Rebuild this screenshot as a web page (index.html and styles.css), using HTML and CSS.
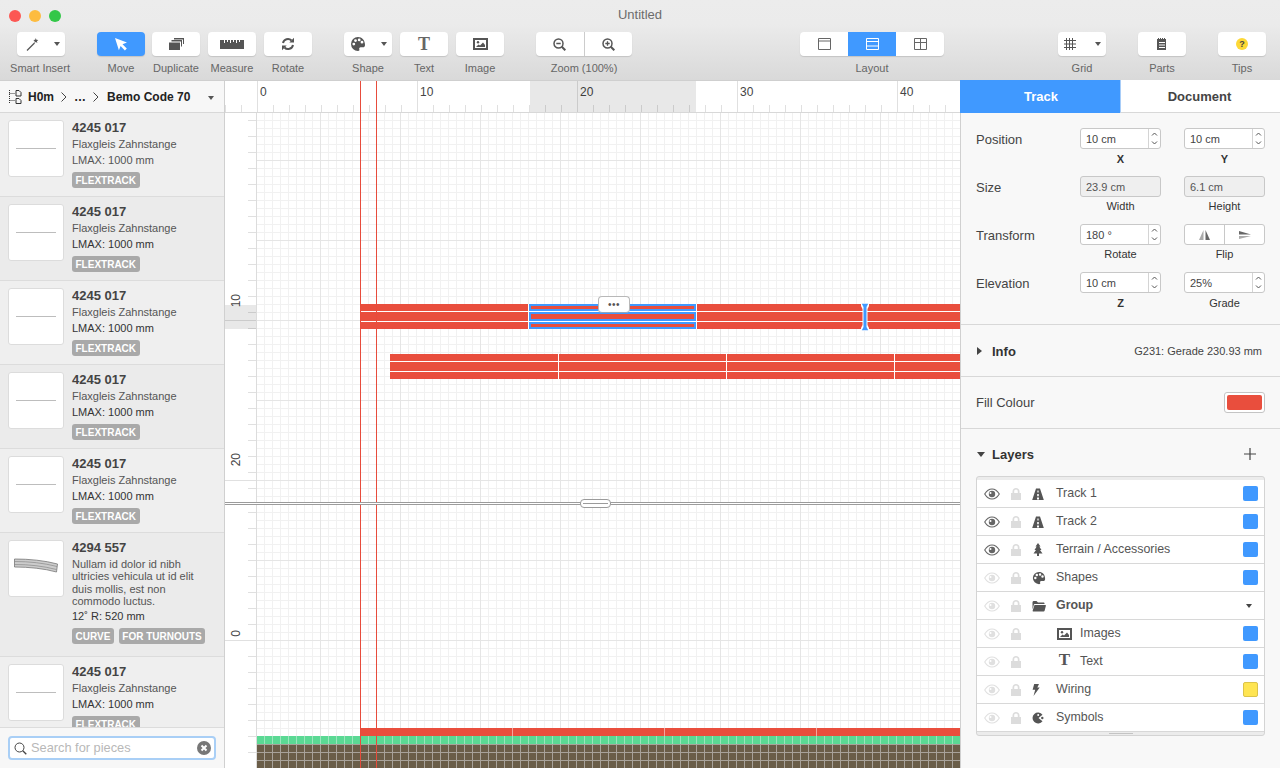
FILE: index.html
```html
<!DOCTYPE html>
<html>
	<head>
		<meta charset="UTF-8">
		<title>Untitled</title>
		<link rel="stylesheet" href="styles.css">
	</head>
	<body>
		<svg class="sprite" xmlns="http://www.w3.org/2000/svg">
			<symbol id="i-palette" viewBox="0 0 16 16"><path fill="currentColor" fill-rule="evenodd" d="M8 1a7 7 0 1 0 0 14c1.3 0 1.7-.8 1.3-1.700-.4-1 .2-2 1.300-2h2.400c1.100 0 2-.8 2-2.300C15 4 12 1 8 1zM3.800 6.700a1.400 1.400 0 1 0 0 2.800 1.400 1.400 0 1 0 0-2.800zM5.500 3.200a1.400 1.400 0 1 0 0 2.800 1.400 1.400 0 1 0 0-2.800zM9.200 2.500a1.400 1.400 0 1 0 0 2.800 1.400 1.400 0 1 0 0-2.800zM12 4.800a1.400 1.400 0 1 0 0 2.800 1.400 1.400 0 1 0 0-2.800z"/></symbol>
			<symbol id="i-image" viewBox="0 0 15 12"><path fill="currentColor" fill-rule="evenodd" d="M0 0h15v12H0zM2 2v8h11V2z"/><path fill="currentColor" d="M3 9l2.500-2.500 1.500 1L10 4.500 12 7v2z"/><circle fill="currentColor" cx="5" cy="4.2" r="1.2"/></symbol>
			<symbol id="i-eye" viewBox="0 0 16 12"><path fill="none" stroke="currentColor" stroke-width="1.100" d="M.7 6C2.800 2.500 5.300 1 8 1s5.200 1.500 7.300 5C13.200 9.500 10.700 11 8 11S2.800 9.500.7 6z"/><path fill="currentColor" fill-rule="evenodd" d="M8 2.800a3.200 3.200 0 1 0 0 6.400 3.200 3.200 0 1 0 0-6.400zM6.500 4a1 1 0 1 1 0 2 1 1 0 1 1 0-2z"/></symbol>
			<symbol id="i-lock" viewBox="0 0 10 12"><path fill="currentColor" fill-rule="evenodd" d="M1.500 5V3.400C1.500 1.400 3 0 5 0s3.500 1.400 3.500 3.400V5H10v7H0V5zM3.200 5h3.600V3.400C6.800 2.300 6 1.600 5 1.600s-1.800.7-1.800 1.800z"/></symbol>
			<symbol id="i-road" viewBox="0 0 12 12"><path fill="currentColor" fill-rule="evenodd" d="M4 .5h4L11.800 12H.2zM5.400 2.500v2h1.200v-2zM5.200 6v2.300h1.600V6zM5 9.500v2h2v-2z"/></symbol>
			<symbol id="i-tree" viewBox="0 0 10 13"><path fill="currentColor" d="M5 0l2.500 3.500H6.300L8.500 7H7l2.500 3.500H6V13H4v-2.500H.5L3 7H1.500l2.200-3.500H2.500z"/></symbol>
			<symbol id="i-folder" viewBox="0 0 14 12"><path fill="currentColor" d="M.5 2.500C.5 1.500 1 1 2 1h2.500L6 2.500h5.500c.6 0 1 .4 1 1V4H3C2.300 4 2 4.300 1.800 5L.5 9.500zM2.500 5h10.800c.5 0 .7.300.6.800l-1.300 5c-.1.500-.5.700-1 .7H1.500c-.7 0-1-.4-.8-1z"/></symbol>
			<symbol id="i-bolt" viewBox="0 0 8 12"><path fill="currentColor" d="M2.200 0H7L5.300 3.500h2.400L1.500 12l1.700-6.300H.6z"/></symbol>
			<symbol id="i-pacman" viewBox="0 0 12 12"><path fill="currentColor" fill-rule="evenodd" d="M10.500 2.800A5.500 5.500 0 1 0 10.500 9.200L6.500 6zM6.200 2a1 1 0 1 1 0 2 1 1 0 1 1 0-2z"/><circle fill="currentColor" cx="10.300" cy="6" r="1.2"/></symbol>
			<symbol id="i-stepper" viewBox="0 0 7 17"><path fill="none" stroke="#555" stroke-width="1" d="M1 5.500l2.500-2.500L6 5.500M1 11.500L3.500 14 6 11.500"/></symbol>
		</svg>

		<header class="head">
			<div class="titlebar">
				<div class="lights">
					<span class="light red"></span>
					<span class="light yellow"></span>
					<span class="light green"></span>
				</div>
				<div class="wintitle">Untitled</div>
				<div></div>
			</div>
			<div class="toolbar">
				<div class="tool first">
					<div class="btn split-caret">
						<svg width="13" height="13" viewBox="0 0 13 13"><path stroke="#555" stroke-width="1.300" d="M1 12.500L8.500 5"/><path fill="#555" d="M9.800 0l.6 1.800L12.300 2l-1.400 1.200.5 1.900-1.600-1-1.600 1 .5-1.900L7.300 2l1.900-.2z"/></svg>
						<i class="caret"></i>
					</div>
					<span>Smart Insert</span>
				</div>
				<div class="tool-group tight">
					<div class="tool">
						<div class="btn active">
							<svg width="14" height="14" viewBox="0 0 14 14"><path fill="#fff" d="M1 1l12 4.400-4.500 1.800 4.300 4.400-1.900 1.800-4.300-4.400-1.700 4.300z"/></svg>
						</div>
						<span>Move</span>
					</div>
					<div class="tool">
						<div class="btn">
							<svg width="15" height="12" viewBox="0 0 15 12"><path fill="#555" d="M5 0h10v6h-1V1.500H5z"/><path fill="#555" d="M2.500 2H13v6.500h-1V3.500H2.500z"/><path fill="#555" d="M0 4.500h11V12H0z"/></svg>
						</div>
						<span>Duplicate</span>
					</div>
					<div class="tool">
						<div class="btn">
							<svg width="24" height="9" viewBox="0 0 24 9"><path fill="#555" fill-rule="evenodd" d="M0 0h24v9H0zM4 0v3h1V0zM7 0v2h1V0zM10 0v3h1V0zM13 0v2h1V0zM16 0v3h1V0zM19 0v2h1V0z"/></svg>
						</div>
						<span>Measure</span>
					</div>
					<div class="tool">
						<div class="btn">
							<svg width="14" height="14" viewBox="0 0 14 14"><path fill="none" stroke="#555" stroke-width="2" d="M2 6a5 5 0 0 1 8.500-2.500M12 8a5 5 0 0 1-8.500 2.500"/><path fill="#555" d="M13 .8v4.700H8.300zM1 13.200V8.500h4.700z"/></svg>
						</div>
						<span>Rotate</span>
					</div>
				</div>
				<div class="tool-group">
					<div class="tool">
						<div class="btn split-caret lead-wide">
							<svg class="ic-dark" width="16" height="16"><use href="#i-palette"/></svg>
							<i class="caret"></i>
						</div>
						<span>Shape</span>
					</div>
					<div class="tool">
						<div class="btn"><b class="serif-t">T</b></div>
						<span>Text</span>
					</div>
					<div class="tool">
						<div class="btn"><svg class="ic-dark" width="15" height="12"><use href="#i-image"/></svg></div>
						<span>Image</span>
					</div>
				</div>
				<div class="tool wide-2">
					<div class="segs">
						<div class="seg-btn">
							<svg width="13" height="13" viewBox="0 0 13 13"><circle cx="5.5" cy="5.5" r="4.500" fill="none" stroke="#555" stroke-width="1.500"/><path stroke="#555" stroke-width="2" d="M8.800 8.800l3.500 3.500"/><path stroke="#555" stroke-width="1.300" d="M3.300 5.500h4.400"/></svg>
						</div>
						<div class="seg-btn">
							<svg width="13" height="13" viewBox="0 0 13 13"><circle cx="5.5" cy="5.5" r="4.500" fill="none" stroke="#555" stroke-width="1.500"/><path stroke="#555" stroke-width="2" d="M8.800 8.800l3.500 3.500"/><path stroke="#555" stroke-width="1.300" d="M3.300 5.500h4.400M5.500 3.300v4.400"/></svg>
						</div>
					</div>
					<span>Zoom (100%)</span>
				</div>
				<div class="tool wide-3">
					<div class="segs">
						<div class="seg-btn plain">
							<svg width="13" height="12" viewBox="0 0 13 12"><path fill="none" stroke="#666" d="M.5.500h12v11H.5zM.5 3h12"/></svg>
						</div>
						<div class="seg-btn on">
							<svg width="13" height="12" viewBox="0 0 13 12"><path fill="none" stroke="#fff" d="M.5.500h12v11H.5zM.5 3.500h12M.5 8h12"/></svg>
						</div>
						<div class="seg-btn plain">
							<svg width="13" height="12" viewBox="0 0 13 12"><path fill="none" stroke="#666" d="M.5.500h12v11H.5zM.5 4.500h12M6.500.5v11"/></svg>
						</div>
					</div>
					<span>Layout</span>
				</div>
				<div class="tool">
					<div class="btn split-caret lead-wide">
						<svg width="12" height="12" viewBox="0 0 12 12"><path stroke="#555" d="M2.500 0v12M5.500 0v12M8.500 0v12M0 2.500h12M0 6h12M0 9.500h12"/></svg>
						<i class="caret"></i>
					</div>
					<span>Grid</span>
				</div>
				<div class="tool">
					<div class="btn">
						<svg width="10" height="12" viewBox="0 0 10 12"><path fill="#555" fill-rule="evenodd" d="M0 1h1V0h1v1h1V0h1v1h1V0h1v1h1V0h1v1h1v11H0zM2 4v1h6V4zM2 6.500v1h6v-1zM2 9v1h6V9z"/></svg>
					</div>
					<span>Parts</span>
				</div>
				<div class="tool">
					<div class="btn"><b class="tip">?</b></div>
					<span>Tips</span>
				</div>
			</div>
		</header>

		<main class="main">
			<aside class="sidebar">
				<div class="crumbs">
					<svg width="14" height="14" viewBox="0 0 14 14"><path fill="none" stroke="#333" stroke-dasharray="1 1" d="M1.500 0v14M1.500 3.500H7M1.500 10.500H7"/><path fill="none" stroke="#333" d="M8 .5h3l2 2V6H8zM8 8.500h3l2 2V13.500H8z"/></svg>
					<b class="crumb first-crumb">H0m</b>
					<svg class="chev" width="6" height="10" viewBox="0 0 6 10"><path fill="none" stroke="#444" d="M.5.500L5 5 .5 9.500"/></svg>
					<b class="crumb dots">…</b>
					<svg class="chev" width="6" height="10" viewBox="0 0 6 10"><path fill="none" stroke="#444" d="M.5.500L5 5 .5 9.500"/></svg>
					<b class="crumb last-crumb">Bemo Code 70</b>
					<i class="caret crumb-caret"></i>
				</div>
				<div class="pieces">
					<div class="piece">
						<div class="thumb"><i class="thumb-line"></i></div>
						<div class="piece-body">
							<h4>4245 017</h4>
							<p>Flaxgleis Zahnstange</p>
							<p>LMAX: 1000 mm</p>
							<div class="tags"><span class="tag">FLEXTRACK</span></div>
						</div>
					</div>
					<div class="piece alt">
						<div class="thumb"><i class="thumb-line"></i></div>
						<div class="piece-body">
							<h4>4245 017</h4>
							<p>Flaxgleis Zahnstange</p>
							<p class="dark">LMAX: 1000 mm</p>
							<div class="tags"><span class="tag">FLEXTRACK</span></div>
						</div>
					</div>
					<div class="piece">
						<div class="thumb"><i class="thumb-line"></i></div>
						<div class="piece-body">
							<h4>4245 017</h4>
							<p>Flaxgleis Zahnstange</p>
							<p class="dark">LMAX: 1000 mm</p>
							<div class="tags"><span class="tag">FLEXTRACK</span></div>
						</div>
					</div>
					<div class="piece alt">
						<div class="thumb"><i class="thumb-line"></i></div>
						<div class="piece-body">
							<h4>4245 017</h4>
							<p>Flaxgleis Zahnstange</p>
							<p class="dark">LMAX: 1000 mm</p>
							<div class="tags"><span class="tag">FLEXTRACK</span></div>
						</div>
					</div>
					<div class="piece">
						<div class="thumb"><i class="thumb-line"></i></div>
						<div class="piece-body">
							<h4>4245 017</h4>
							<p>Flaxgleis Zahnstange</p>
							<p class="dark">LMAX: 1000 mm</p>
							<div class="tags"><span class="tag">FLEXTRACK</span></div>
						</div>
					</div>
					<div class="piece alt tall">
						<div class="thumb">
							<svg width="44" height="16" viewBox="0 0 44 16"><path fill="#ccc" stroke="#777" stroke-width=".8" d="M.5 1c15 0 30 1.500 43 5l-1 8C30 10.500 15 9 .5 9z"/><path fill="none" stroke="#888" stroke-width=".7" d="M.5 3.500c15 0 29 1.500 42.500 5M.5 6.500c15 0 28 1.500 42 5"/></svg>
						</div>
						<div class="piece-body">
							<h4>4294 557</h4>
							<p class="desc">Nullam id dolor id nibh ultricies vehicula ut id elit duis mollis, est non commodo luctus.</p>
							<p class="dark spec">12˚ R: 520 mm</p>
							<div class="tags"><span class="tag">CURVE</span><span class="tag">FOR TURNOUTS</span></div>
						</div>
					</div>
					<div class="piece">
						<div class="thumb"><i class="thumb-line"></i></div>
						<div class="piece-body">
							<h4>4245 017</h4>
							<p>Flaxgleis Zahnstange</p>
							<p class="dark">LMAX: 1000 mm</p>
							<div class="tags"><span class="tag">FLEXTRACK</span></div>
						</div>
					</div>
				</div>
				<div class="searchbar">
					<div class="search">
						<svg width="13" height="13" viewBox="0 0 13 13"><circle cx="5.5" cy="5.5" r="4.500" fill="none" stroke="#444"/><path stroke="#444" stroke-width="1.300" d="M8.800 8.800l3.500 3.500"/></svg>
						<input type="text" placeholder="Search for pieces">
						<svg width="14" height="14" viewBox="0 0 14 14"><circle cx="7" cy="7" r="7" fill="#777"/><path stroke="#fff" stroke-width="2" d="M4.500 4.500l5 5M9.500 4.500l-5 5"/></svg>
					</div>
				</div>
			</aside>

			<section class="canvas">
				<i class="guide g1"></i>
				<i class="guide g2"></i>
				<div class="hruler">
					<i class="ruler-sel"></i>
					<span class="mark">0</span>
					<span class="mark">10</span>
					<span class="mark">20</span>
					<span class="mark">30</span>
					<span class="mark">40</span>
				</div>
				<div class="pane pane-top">
					<div class="vruler">
						<i class="vruler-sel"></i>
						<span class="vmark v10">10</span>
						<span class="vmark v20">20</span>
					</div>
					<div class="grid">
						<div class="track t1">
							<div class="seg"><i></i><i></i><i></i></div>
							<div class="seg sel"><i></i><i></i><i></i></div>
							<div class="seg"><i></i><i></i><i></i></div>
							<div class="seg"><i></i><i></i><i></i></div>
						</div>
						<div class="track t2">
							<div class="seg"><i></i><i></i><i></i></div>
							<div class="seg"><i></i><i></i><i></i></div>
							<div class="seg"><i></i><i></i><i></i></div>
							<div class="seg"><i></i><i></i><i></i></div>
						</div>
						<div class="more">•••</div>
						<svg class="joint" width="8" height="28" viewBox="0 0 8 28"><path fill="#fff" d="M0 0h8v3L6.500 6v16L8 25v3H0v-3l1.500-3V6L0 3z"/><path fill="#4099ff" d="M.8.800h6.400L5.500 4v20l1.700 3.200H.8L2.500 24V4z"/></svg>
					</div>
				</div>
				<div class="divider"><i class="divider-grip"></i></div>
				<div class="pane pane-bottom">
					<div class="vruler">
						<span class="vmark v0">0</span>
					</div>
					<div class="grid">
						<div class="low-track"><i></i><i></i><i></i><i></i></div>
						<div class="ground">
							<div class="grass"></div>
							<div class="earth"></div>
						</div>
					</div>
				</div>
			</section>

			<aside class="panel">
				<div class="tabs">
					<div class="tab on">Track</div>
					<div class="tab">Document</div>
				</div>

				<div class="props">
					<div class="prop">
						<label>Position</label>
						<div class="field">
							<div class="input"><span>10 cm</span><em class="stepper"><svg width="7" height="17"><use href="#i-stepper"/></svg></em></div>
							<small class="bold-sub">X</small>
						</div>
						<div class="field">
							<div class="input"><span>10 cm</span><em class="stepper"><svg width="7" height="17"><use href="#i-stepper"/></svg></em></div>
							<small class="bold-sub">Y</small>
						</div>
					</div>
					<div class="prop">
						<label>Size</label>
						<div class="field">
							<div class="input off"><span>23.9 cm</span></div>
							<small>Width</small>
						</div>
						<div class="field">
							<div class="input off"><span>6.1 cm</span></div>
							<small>Height</small>
						</div>
					</div>
					<div class="prop">
						<label>Transform</label>
						<div class="field">
							<div class="input"><span>180 °</span><em class="stepper"><svg width="7" height="17"><use href="#i-stepper"/></svg></em></div>
							<small>Rotate</small>
						</div>
						<div class="field">
							<div class="input flip">
								<div class="flip-btn"><svg width="11" height="10" viewBox="0 0 11 10"><path fill="#aaa" d="M4.500 0v10H0z"/><path fill="#666" d="M6.500 0L11 10H6.500z"/></svg></div>
								<div class="flip-btn"><svg width="12" height="8" viewBox="0 0 12 8"><path fill="#666" d="M0 0l12 3.500H0z"/><path fill="#aaa" d="M0 5h12L0 8z"/></svg></div>
							</div>
							<small>Flip</small>
						</div>
					</div>
					<div class="prop">
						<label>Elevation</label>
						<div class="field">
							<div class="input"><span>10 cm</span><em class="stepper"><svg width="7" height="17"><use href="#i-stepper"/></svg></em></div>
							<small class="bold-sub">Z</small>
						</div>
						<div class="field">
							<div class="input"><span>25%</span><em class="stepper"><svg width="7" height="17"><use href="#i-stepper"/></svg></em></div>
							<small class="low-sub">Grade</small>
						</div>
					</div>
				</div>

				<div class="row-info">
					<i class="tri-right"></i>
					<b>Info</b>
					<span>G231: Gerade 230.93 mm</span>
				</div>

				<div class="row-fill">
					<span>Fill Colour</span>
					<div class="well"><i></i></div>
				</div>

				<div class="layers">
					<div class="layers-head">
						<i class="tri-down"></i>
						<b>Layers</b>
						<svg width="12" height="12" viewBox="0 0 12 12"><path stroke="#444" stroke-width="1.200" d="M6 0v12M0 6h12"/></svg>
					</div>
					<div class="layer-list">
						<div class="layer">
							<svg class="eye" width="16" height="12"><use href="#i-eye"/></svg>
							<svg class="lock" width="10" height="12"><use href="#i-lock"/></svg>
							<svg class="kind" width="12" height="12"><use href="#i-road"/></svg>
							<span class="name">Track 1</span>
							<i class="chip"></i>
						</div>
						<div class="layer">
							<svg class="eye" width="16" height="12"><use href="#i-eye"/></svg>
							<svg class="lock" width="10" height="12"><use href="#i-lock"/></svg>
							<svg class="kind" width="12" height="12"><use href="#i-road"/></svg>
							<span class="name">Track 2</span>
							<i class="chip"></i>
						</div>
						<div class="layer">
							<svg class="eye" width="16" height="12"><use href="#i-eye"/></svg>
							<svg class="lock" width="10" height="12"><use href="#i-lock"/></svg>
							<svg class="kind" width="12" height="13"><use href="#i-tree"/></svg>
							<span class="name">Terrain / Accessories</span>
							<i class="chip"></i>
						</div>
						<div class="layer">
							<svg class="eye dim" width="16" height="12"><use href="#i-eye"/></svg>
							<svg class="lock" width="10" height="12"><use href="#i-lock"/></svg>
							<svg class="kind" width="14" height="14"><use href="#i-palette"/></svg>
							<span class="name">Shapes</span>
							<i class="chip"></i>
						</div>
						<div class="layer">
							<svg class="eye dim" width="16" height="12"><use href="#i-eye"/></svg>
							<svg class="lock" width="10" height="12"><use href="#i-lock"/></svg>
							<svg class="kind" width="14" height="12"><use href="#i-folder"/></svg>
							<b class="name group-name">Group</b>
							<i class="caret group-caret"></i>
						</div>
						<div class="layer child">
							<svg class="eye dim" width="16" height="12"><use href="#i-eye"/></svg>
							<svg class="lock" width="10" height="12"><use href="#i-lock"/></svg>
							<svg class="kind" width="15" height="12"><use href="#i-image"/></svg>
							<span class="name">Images</span>
							<i class="chip"></i>
						</div>
						<div class="layer child">
							<svg class="eye dim" width="16" height="12"><use href="#i-eye"/></svg>
							<svg class="lock" width="10" height="12"><use href="#i-lock"/></svg>
							<b class="kind serif-t small">T</b>
							<span class="name">Text</span>
							<i class="chip"></i>
						</div>
						<div class="layer">
							<svg class="eye dim" width="16" height="12"><use href="#i-eye"/></svg>
							<svg class="lock" width="10" height="12"><use href="#i-lock"/></svg>
							<svg class="kind" width="8" height="12"><use href="#i-bolt"/></svg>
							<span class="name">Wiring</span>
							<i class="chip yellow"></i>
						</div>
						<div class="layer">
							<svg class="eye dim" width="16" height="12"><use href="#i-eye"/></svg>
							<svg class="lock" width="10" height="12"><use href="#i-lock"/></svg>
							<svg class="kind" width="12" height="12"><use href="#i-pacman"/></svg>
							<span class="name">Symbols</span>
							<i class="chip"></i>
						</div>
						<div class="list-foot"><i></i></div>
					</div>
				</div>
			</aside>
		</main>
	</body>
</html>
```
FILE: styles.css
```css
*{
	margin:0;padding:0;box-sizing:border-box;
}
body{
	display:flex;
	flex-direction:column;
	height:768px;
	overflow:hidden;
	font-family:"Liberation Sans",Arial,sans-serif;
	font-size:12px;
	color:#444;
	background:#f8f8f8;
}
i,em{
	font-style:normal;
	display:block;
}
.sprite{
	display:none;
}

/* window head */
.head{
	height:81px;
	flex:none;
	background:linear-gradient(#ececec,#ebebeb 30%,#d9d9d9);
	border-bottom:1px solid #cfcfcf;
}
.titlebar{
	height:32px;
	display:grid;
	grid-template-columns:1fr auto 1fr;
	align-items:center;
	padding:0 9px;
}
.lights{
	display:flex;
	gap:8px;
}
.light{
	width:12px;
	height:12px;
	border-radius:50%;
}
.light.red{background:#fc5753;}
.light.yellow{background:#fdbc40;}
.light.green{background:#33c748;}
.wintitle{
	font-size:13px;
	color:#6b6b6b;
	padding-bottom:3px;
}
.toolbar{
	display:flex;
	align-items:flex-start;
	padding-left:17px;
}
.tool-group{
	display:flex;
	gap:8px;
	margin-left:32px;
}
.tool-group.tight .tool:first-child{
	margin-right:-1px;
}
.tool{
	width:48px;
	display:flex;
	flex-direction:column;
	align-items:center;
}
.tool > span{
	font-size:11px;
	line-height:13px;
	color:#666;
	white-space:nowrap;
	margin-top:6px;
}
.toolbar > .tool{
	margin-left:32px;
}
.toolbar > .tool.first{
	margin-left:0;
}
.tool.first > span{
	margin-right:2px;
}
.toolbar > .tool.wide-2{
	width:96px;
}
.toolbar > .tool.wide-3{
	width:144px;
	margin-left:168px;
}
.toolbar > .tool.wide-3 + .tool{
	margin-left:114px;
}
.btn{
	width:48px;
	height:24px;
	background:#fff;
	border-radius:4px;
	box-shadow:0 1px 1px #c4c4c4;
	display:flex;
	align-items:center;
	justify-content:center;
}
.btn.active{
	background:#4099ff;
}
.btn.split-caret{
	justify-content:space-between;
	padding:0 5px 0 9px;
}
.btn.split-caret.lead-wide{
	padding-left:6px;
}
.caret{
	width:0;
	height:0;
	border-left:3.5px solid transparent;
	border-right:3.5px solid transparent;
	border-top:4px solid #555;
}
.serif-t{
	font-family:"Liberation Serif","Times New Roman",serif;
	font-size:18px;
	line-height:18px;
	color:#666;
}
.ic-dark{
	color:#555;
}
.tip{
	width:12px;
	height:12px;
	border-radius:50%;
	background:#fdd835;
	color:#444;
	font-size:9px;
	line-height:12px;
	text-align:center;
}
.segs{
	display:flex;
	width:100%;
	height:24px;
	background:#fff;
	border-radius:4px;
	overflow:hidden;
	box-shadow:0 1px 1px #c4c4c4;
}
.seg-btn{
	flex:1;
	display:flex;
	align-items:center;
	justify-content:center;
	border-left:1px solid #ccc;
}
.seg-btn:first-child,.seg-btn.plain,.seg-btn.on{
	border-left:none;
}
.seg-btn.on{
	background:#4099ff;
}

.main{
	flex:1;
	min-height:0;
	display:flex;
}

/* left column */
.sidebar{
	width:225px;
	flex:none;
	display:flex;
	flex-direction:column;
	border-right:1px solid #d0d0d0;
	background:#efefef;
}
.crumbs{
	height:32px;
	flex:none;
	display:flex;
	align-items:center;
	padding-left:8px;
	background:#f7f7f7;
	border-bottom:1px solid #d8d8d8;
}
.crumb{
	font-size:12px;
	color:#222;
}
.first-crumb{margin-left:6px;}
.chev{margin-left:7px;}
.dots{margin-left:7px;}
.dots + .chev{margin-left:7px;}
.last-crumb{margin-left:8px;}
.crumb-caret{margin-left:18px;margin-top:2px;}
.pieces{
	flex:1;
	min-height:0;
	overflow:hidden;
}
.piece{
	display:flex;
	gap:8px;
	padding:7px 8px 8px;
	border-bottom:1px solid #dcdcdc;
	background:#efefef;
}
.piece.alt{
	background:#ebebeb;
}
.piece.tall{
	padding-bottom:12px;
}
.thumb{
	width:56px;
	height:57px;
	flex:none;
	background:#fff;
	border:1px solid #dcdcdc;
	border-radius:3px;
	display:flex;
	align-items:center;
	justify-content:center;
}
.thumb svg{
	margin-top:-6px;
}
.thumb-line{
	width:40px;
	height:1px;
	background:#bdbdbd;
}
.piece-body{
	padding-top:1px;
}
.piece-body h4{
	font-size:13px;
	line-height:14px;
	color:#444;
	margin-bottom:1px;
}
.piece-body p{
	font-size:11px;
	line-height:16px;
	color:#555;
}
.piece-body p.dark{
	color:#333;
}
.piece-body p.desc{
	line-height:12.3px;
	margin-top:3px;
	width:130px;
}
.piece-body p.spec{
	margin-top:1px;
}
.tags{
	display:flex;
	gap:5px;
	margin-top:4px;
}
.tag{
	height:16px;
	padding:0 3.5px;
	background:#a9a9a9;
	border-radius:3px;
	color:#fff;
	font-size:10px;
	font-weight:bold;
	line-height:17px;
	white-space:nowrap;
}
.searchbar{
	height:41px;
	flex:none;
	padding:8px 8px 9px;
	background:#f7f7f7;
	border-top:1px solid #dcdcdc;
}
.search{
	height:24px;
	display:flex;
	align-items:center;
	gap:4px;
	padding:0 3px 0 4px;
	background:#fff;
	border:2px solid #a9cff6;
	border-radius:4px;
}
.search input{
	flex:1;
	min-width:0;
	border:none;
	outline:none;
	background:none;
	margin-top:-2px;
	font:12.8px "Liberation Sans",Arial,sans-serif;
	color:#444;
}
.search input::placeholder{
	color:#b8b8b8;
	opacity:1;
}

/* canvas */
.canvas{
	width:735px;
	flex:none;
	position:relative;
	display:flex;
	flex-direction:column;
	overflow:hidden;
	background:#fff;
}
.guide{
	position:absolute;
	top:0;
	bottom:0;
	width:1px;
	background:#e74c3c;
	z-index:2;
}
.g1{left:135px;}
.g2{left:151px;}
.hruler{
	height:32px;
	flex:none;
	position:relative;
	display:flex;
	padding-left:32px;
	border-bottom:1px solid #d8d8d8;
	background-color:#fff;
	background-image:
		linear-gradient(90deg,#e0e0e0 1px,transparent 1px),
		linear-gradient(90deg,#e0e0e0 1px,transparent 1px);
	background-size:160px 100%,16px 7px;
	background-position:32px 0,0 bottom;
	background-repeat:repeat-x;
}
.ruler-sel{
	position:absolute;
	left:305px;
	top:0;
	bottom:0;
	width:166px;
	background:rgba(0,0,0,.09);
}
.mark{
	width:160px;
	flex:none;
	padding:4px 0 0 3px;
	font-size:12px;
	line-height:14px;
	color:#444;
}
.pane{
	display:flex;
	min-height:0;
}
.pane-top{
	height:389px;
	flex:none;
}
.pane-bottom{
	flex:1;
}
.vruler{
	width:32px;
	flex:none;
	position:relative;
	border-right:1px solid #dcdcdc;
	background-image:
		linear-gradient(#e0e0e0 1px,transparent 1px),
		linear-gradient(#e0e0e0 1px,transparent 1px),
		linear-gradient(#e0e0e0 1px,transparent 1px);
	background-size:100% 1px,100% 1px,8px 16px;
	background-repeat:no-repeat,no-repeat,repeat-y;
}
.pane-top .vruler{
	background-position:0 207px,0 367px,right 7px;
}
.pane-bottom .vruler{
	background-position:0 135px,0 135px,right 7px;
}
.vruler-sel{
	position:absolute;
	left:0;
	right:0;
	top:192px;
	height:24px;
	background:rgba(0,0,0,.09);
}
.vmark{
	position:absolute;
	left:4px;
	writing-mode:vertical-rl;
	transform:rotate(180deg);
	font-size:12px;
	line-height:14px;
	color:#444;
}
.v10{top:181px;}
.v20{top:340px;}
.v0{top:125px;}
.grid{
	flex:1;
	position:relative;
	overflow:hidden;
	background-color:#fff;
	background-image:
		linear-gradient(90deg,#e5e5e5 1px,transparent 1px),
		linear-gradient(#e5e5e5 1px,transparent 1px),
		linear-gradient(90deg,#f1f1f1 1px,transparent 1px),
		linear-gradient(#f1f1f1 1px,transparent 1px);
	background-size:80px 80px,80px 80px,8px 8px,8px 8px;
}
.pane-top .grid{
	background-position:63px 0,0 47px,7px 0,0 7px;
}
.pane-bottom .grid{
	background-position:63px 0,0 55px,7px 0,0 7px;
}
.track{
	position:absolute;
	display:flex;
	gap:1px;
	height:25px;
	background:#fff;
}
.t1{left:103px;top:191px;}
.t2{left:133px;top:241px;}
.seg{
	width:167px;
	flex:none;
	display:flex;
	flex-direction:column;
	gap:1px;
}
.seg:first-child{
	width:168px;
}
.seg i{
	height:7px;
	background:#e94e3d;
}
.seg i:nth-child(2){
	height:9px;
}
.seg.sel i{
	border:2px solid #4099ff;
}
.more{
	position:absolute;
	left:341px;
	top:183px;
	width:32px;
	height:17px;
	background:#fff;
	border:1px solid #b8b8b8;
	border-bottom-color:#8fa6c0;
	border-radius:4px;
	font-size:10px;
	line-height:15px;
	letter-spacing:.5px;
	text-align:center;
	color:#555;
}
.joint{
	position:absolute;
	left:604px;
	top:190px;
}
.divider{
	height:3px;
	flex:none;
	position:relative;
	z-index:3;
	background:#fff;
	border-top:1px solid #9b9b9b;
	border-bottom:1px solid #9b9b9b;
}
.divider-grip{
	position:absolute;
	left:355px;
	top:-4px;
	width:31px;
	height:9px;
	background:#fff;
	border:1px solid #9b9b9b;
	border-radius:4px;
}
.divider-grip::after{
	content:"";
	display:block;
	height:1px;
	margin:3px 2px 0;
	background:#9b9b9b;
}
.low-track{
	position:absolute;
	left:103px;
	top:223px;
	display:flex;
	gap:1px;
	height:8px;
	background:#f4a79f;
}
.low-track i{
	width:151px;
	flex:none;
	background:#e94e3d;
}
.low-track i:first-child{
	width:152px;
}
.ground{
	position:absolute;
	left:0;
	right:0;
	top:231px;
	bottom:0;
}
.grass{
	height:8px;
	background-color:#5bd994;
	background-image:linear-gradient(90deg,#9be6bd 1px,transparent 1px);
	background-size:8px 8px;
	background-position:7px 0;
}
.earth{
	height:24px;
	background-color:#6a5d48;
	background-image:
		linear-gradient(90deg,#a8a29a 1px,transparent 1px),
		linear-gradient(#a8a29a 1px,transparent 1px);
	background-size:8px 8px;
	background-position:7px 0,0 0;
}

/* right panel */
.panel{
	width:320px;
	flex:none;
	display:flex;
	flex-direction:column;
	background:#f8f8f8;
	border-left:1px solid #d0d0d0;
	color:#333;
}
.tabs{
	display:flex;
	height:33px;
	flex:none;
	margin:-1px 0 0 -1px;
}
.tab{
	flex:1;
	font-size:13px;
	font-weight:bold;
	line-height:33px;
	text-align:center;
	color:#444;
	background:#fff;
	border-bottom:1px solid #d8d8d8;
	border-left:1px solid #a8cdf8;
	padding-right:2px;
}
.tab.on{
	flex:none;
	width:160px;
	color:#fff;
	background:#4099ff;
	border:none;
	padding:0 0 0 2px;
}
.props{
	height:212px;
	flex:none;
	padding:15px 15px 0;
	border-bottom:1px solid #d8d8d8;
}
.prop{
	height:48px;
	display:grid;
	grid-template-columns:104px 81px 104px;
}
.prop label{
	font-size:13px;
	line-height:23px;
	color:#444;
}
.field{
	display:flex;
	flex-direction:column;
	align-items:center;
}
.field + .field{
	margin-left:23px;
	width:81px;
}
.input{
	width:81px;
	height:21px;
	flex:none;
	display:flex;
	align-items:center;
	justify-content:space-between;
	padding-left:5px;
	font-size:11px;
	color:#444;
	background:#fff;
	border:1px solid #c8c8c8;
	border-radius:3px;
}
.input.off{
	background:#efefef;
	color:#555;
}
.stepper{
	width:12px;
	height:19px;
	flex:none;
	display:flex;
	align-items:center;
	justify-content:center;
	border-left:1px solid #d4d4d4;
}
.input.flip{
	padding:0;
}
.flip-btn{
	flex:1;
	height:100%;
	display:flex;
	align-items:center;
	justify-content:center;
}
.flip-btn + .flip-btn{
	border-left:1px solid #c8c8c8;
}
.field small{
	font-size:11px;
	line-height:13px;
	margin-top:3px;
	color:#333;
}
.field small.bold-sub,.field small.low-sub{
	margin-top:4px;
}
.field small.bold-sub{
	font-weight:bold;
}
.row-info{
	height:52px;
	flex:none;
	display:flex;
	align-items:center;
	padding:1px 18px 0 16px;
	border-bottom:1px solid #d8d8d8;
}
.row-info b{
	font-size:13px;
	color:#333;
	margin-left:10px;
}
.row-info span{
	margin-left:auto;
	font-size:11px;
	color:#444;
}
.tri-right{
	width:0;
	height:0;
	border-top:4px solid transparent;
	border-bottom:4px solid transparent;
	border-left:5px solid #444;
}
.tri-down{
	width:0;
	height:0;
	border-left:4.5px solid transparent;
	border-right:4.5px solid transparent;
	border-top:5px solid #444;
}
.row-fill{
	height:52px;
	flex:none;
	display:flex;
	align-items:center;
	justify-content:space-between;
	padding:0 15px;
	font-size:13px;
	color:#444;
	border-bottom:1px solid #d8d8d8;
}
.well{
	width:41px;
	height:21px;
	padding:2px;
	background:#fff;
	border:1px solid #c4c4c4;
	border-radius:3px;
}
.well i{
	height:100%;
	background:#e94e3d;
	border-radius:2px;
}
.layers{
	padding:0 15px;
}
.layers-head{
	height:47px;
	display:flex;
	align-items:center;
	padding:3px 9px 0 1px;
}
.layers-head b{
	font-size:13px;
	margin-left:7px;
}
.layers-head svg{
	margin-left:auto;
}
.layer-list{
	width:289px;
	border:1px solid #d4d4d4;
	border-radius:3px;
	padding-top:3px;
	background:#ececec;
}
.layer{
	height:28px;
	display:flex;
	align-items:center;
	background:#fff;
	border-bottom:1px solid #d8d8d8;
	position:relative;
	padding-left:7px;
	font-size:12.4px;
	color:#555;
}
.eye{
	color:#666;
	flex:none;
}
.eye.dim{
	color:#e0e0e0;
}
.lock{
	color:#dcdcdc;
	margin-left:11px;
	flex:none;
}
.kind{
	color:#555;
	flex:none;
	margin-left:11px;
}
.layer .name{
	position:absolute;
	left:79px;
	line-height:29px;
}
.layer .group-name{
	line-height:25px;
}
.layer.child .kind{
	margin-left:36px;
}
.layer.child .name{
	left:103px;
}
.serif-t.small{
	font-size:17px;
	width:15px;
	text-align:center;
	margin-top:-3px;
}
.chip{
	position:absolute;
	right:6px;
	width:15px;
	height:15px;
	background:#4099ff;
	border-radius:2px;
}
.chip.yellow{
	background:#ffe552;
	border:1px solid #dcc44a;
}
.group-caret{
	position:absolute;
	right:12px;
	border-top-color:#444;
}
.list-foot{
	height:3px;
	display:flex;
	justify-content:center;
	padding-top:1px;
}
.list-foot i{
	width:24px;
	height:1px;
	background:#c4c4c4;
}
```
